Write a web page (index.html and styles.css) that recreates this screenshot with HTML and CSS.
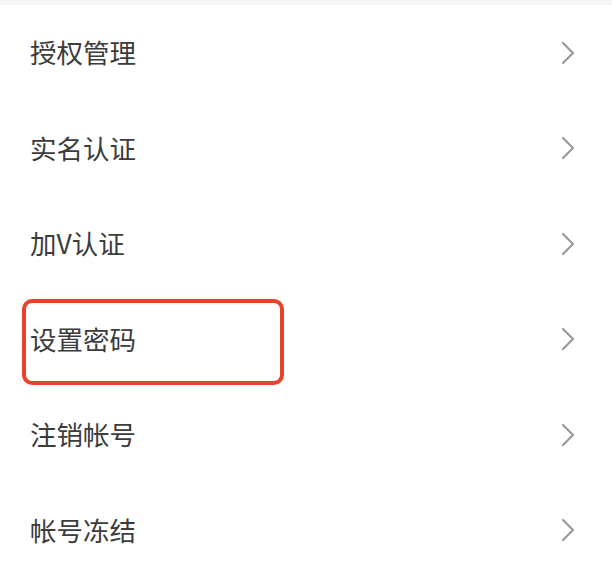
FILE: index.html
```html
<!DOCTYPE html>
<html lang="zh-CN">
<head>
<meta charset="utf-8">
<link rel="stylesheet" href="styles.css">
</head>
<body>
<div class="page">
  <div class="topbar"></div>
  <ul class="menu">
    <li class="row"><span class="label">授权管理</span><svg class="chev" viewBox="0 0 14 24"><path d="M2 2 L12 12 L2 22"/></svg></li>
    <li class="row"><span class="label">实名认证</span><svg class="chev" viewBox="0 0 14 24"><path d="M2 2 L12 12 L2 22"/></svg></li>
    <li class="row"><span class="label">加V认证</span><svg class="chev" viewBox="0 0 14 24"><path d="M2 2 L12 12 L2 22"/></svg></li>
    <li class="row"><span class="label">设置密码</span><svg class="chev" viewBox="0 0 14 24"><path d="M2 2 L12 12 L2 22"/></svg><div class="highlight"></div></li>
    <li class="row"><span class="label">注销帐号</span><svg class="chev" viewBox="0 0 14 24"><path d="M2 2 L12 12 L2 22"/></svg></li>
    <li class="row"><span class="label">帐号冻结</span><svg class="chev" viewBox="0 0 14 24"><path d="M2 2 L12 12 L2 22"/></svg></li>
  </ul>
</div>
</body>
</html>
```
FILE: styles.css
```css
html, body {
  margin: 0;
  padding: 0;
  background: #ffffff;
}
.page {
  width: 612px;
  height: 578px;
  overflow: hidden;
  font-family: "Noto Sans CJK SC", "Noto Sans", sans-serif;
}
.topbar {
  height: 5px;
  background: #f6f6f6;
}
.menu {
  list-style: none;
  margin: 0;
  padding: 0;
}
.row {
  position: relative;
  height: 95.5px;
  display: flex;
  align-items: center;
  justify-content: space-between;
  padding: 0 37px 0 30px;
  box-sizing: border-box;
}
.label {
  font-size: 26.5px;
  color: #3c3c3c;
  line-height: 1;
  margin-top: -1px;
}
.chev {
  width: 14px;
  height: 24px;
  fill: none;
  stroke: #9a9a9a;
  stroke-width: 2.2;
  stroke-linecap: round;
  stroke-linejoin: round;
}
.highlight {
  position: absolute;
  left: 22px;
  top: 7.5px;
  width: 262px;
  height: 86px;
  box-sizing: border-box;
  border: 4.5px solid #e8422b;
  border-radius: 10px;
}
```
